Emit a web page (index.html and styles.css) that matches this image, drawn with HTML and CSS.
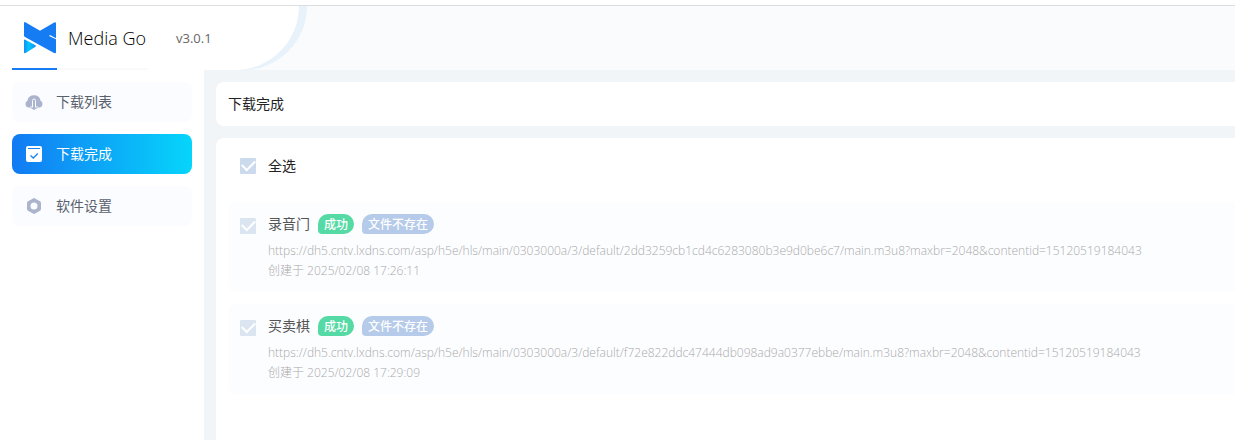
FILE: index.html
```
<!DOCTYPE html>
<html lang="zh-CN">
<head>
  <meta charset="UTF-8">
  <meta name="viewport" content="width=device-width, initial-scale=1.0">
  <title>Media Go</title>
  <link rel="stylesheet" href="styles.css">
</head>
<body>
  <header class="header">
    <div class="brand">
      <svg class="logo" viewBox="0 0 32 32" aria-hidden="true">
        <defs>
          <linearGradient id="play" x1="0" x2="1"><stop offset="0" stop-color="#168cf8"/><stop offset="0.4" stop-color="#00c8ff"/><stop offset="1" stop-color="#168cf8"/></linearGradient>
        </defs>
        <path fill="#167cf3" d="M0 1.500Q0 -0.500 1.800 0.400L16 8.800 30.200 0.400Q32 -0.400 32 1.500V16.300L26 13 25 14 32 17.300V30Q32 32 30 31L1 15Q0 14.500 0 13.500Z"/>
        <path fill="url(#play)" d="M0 18.500Q0 17 1.300 17.800L11.500 23.200Q12.500 24 11.500 24.700L2 30.700Q0 32 0 30Z"/>
      </svg>
      <h1>Media Go</h1>
      <span class="version">v3.0.1</span>
      <div class="progress"></div>
    </div>
  </header>
  <div class="layout">
    <nav class="sidebar">
      <a href="#list">
        <svg viewBox="0 0 20 20" aria-hidden="true">
          <path fill="#abb4cc" d="M6 15.500H4.800A3.600 3.600 0 0 1 3.400 8.700 6.700 6.700 0 0 1 16.600 8.700 3.600 3.600 0 0 1 15.200 15.500H14L10 18 6 15.500Z"/>
          <path fill="none" stroke="#fafbff" d="M8.500 15V8.500a1.500 1.500 0 0 1 3 0V15M6.500 14l2 2M13.500 14l-2 2"/>
        </svg>
        下载列表
      </a>
      <a href="#done" class="active">
        <svg viewBox="0 0 20 20" aria-hidden="true">
          <rect x="2" y="2" width="16" height="16" rx="2" fill="#fff"/>
          <path fill="none" stroke="#1685f8" d="M4 4.500H16"/>
          <path fill="none" stroke="#1685f8" stroke-width="1.300" d="M6.500 11.500l2.800 2.500 4.500-4.500"/>
        </svg>
        下载完成
      </a>
      <a href="#settings">
        <svg viewBox="0 0 20 20" aria-hidden="true">
          <path fill="#abb4cc" fill-rule="evenodd" d="M9 2.400Q10 1.800 11 2.400L16 5.200Q17 5.800 17 7V13Q17 14.200 16 14.800L11 17.600Q10 18.200 9 17.600L4 14.800Q3 14.200 3 13V7Q3 5.800 4 5.200ZM10 6.500a3.500 3.500 0 1 0 0 7a3.500 3.500 0 0 0 0-7Z"/>
        </svg>
        软件设置
      </a>
    </nav>
    <main>
      <h2 class="card title">下载完成</h2>
      <section class="card content">
        <label class="select-all"><input type="checkbox" checked disabled>全选</label>
        <ul class="list">
          <li class="item">
            <input type="checkbox" id="video1" checked disabled>
            <div class="info">
              <div class="name">
                <label for="video1">录音门</label>
                <span class="tag success">成功</span>
                <span class="tag missing">文件不存在</span>
              </div>
              <p>https://dh5.cntv.lxdns.com/asp/h5e/hls/main/0303000a/3/default/2dd3259cb1cd4c6283080b3e9d0be6c7/main.m3u8?maxbr=2048&amp;contentid=15120519184043</p>
              <p>创建于 2025/02/08 17:26:11</p>
            </div>
          </li>
          <li class="item">
            <input type="checkbox" id="video2" checked disabled>
            <div class="info">
              <div class="name">
                <label for="video2">买卖棋</label>
                <span class="tag success">成功</span>
                <span class="tag missing">文件不存在</span>
              </div>
              <p>https://dh5.cntv.lxdns.com/asp/h5e/hls/main/0303000a/3/default/f72e822ddc47444db098ad9a0377ebbe/main.m3u8?maxbr=2048&amp;contentid=15120519184043</p>
              <p>创建于 2025/02/08 17:29:09</p>
            </div>
          </li>
        </ul>
      </section>
    </main>
  </div>
</body>
</html>
```
FILE: styles.css
```
* { box-sizing: border-box; }
body {
  margin: 0; padding-top: 5px; min-height: 100vh; display: flex; flex-direction: column;
  background: #fff; color: #222; font-family: "Open Sans", "Noto Sans CJK SC", sans-serif; font-size: 14px; line-height: 20px;
}
h1, h2, p, ul { margin: 0; padding: 0; font-weight: 400; }

.header { display: flex; height: 65px; border-top: 1px solid #dcdfe2; background: #fafbfd; overflow: hidden; }
.brand {
  position: relative; display: flex; align-items: center; width: 299px; padding-left: 24px;
  background: #fff; border-bottom-right-radius: 64px; box-shadow: 8px 0 0 #e8f2fa;
}
.logo { width: 32px; height: 32px; }
.brand h1 { margin-left: 12px; font-size: 18px; font-weight: 300; line-height: 24px; color: #000; }
.version { margin-left: 30px; font-size: 13px; color: #666; }
.progress { position: absolute; left: 12px; bottom: 0; width: 136px; height: 2px; background: linear-gradient(to right, #167cf3 45px, #f8fafc 45px); }

.layout { flex: 1; display: flex; }
.sidebar { flex: none; width: 204px; padding: 12px; display: flex; flex-direction: column; gap: 12px; }
.sidebar a {
  display: flex; align-items: center; gap: 12px; height: 40px; padding: 0 12px;
  border-radius: 8px; background: #fbfcff; color: #59616d; text-decoration: none;
}
.sidebar a.active { background: linear-gradient(to right, #127af3, #06d5fb); color: #fff; }
.sidebar svg { width: 20px; height: 20px; }

main { flex: 1; min-width: 0; padding: 12px 0 0 12px; display: flex; flex-direction: column; gap: 12px; background: #f1f5f8; }
.card { background: #fff; border-radius: 8px 0 0 8px; }
.title { padding: 12px; font-size: 14px; line-height: 20px; }
.content { flex: 1; padding: 12px 0 12px 12px; border-bottom-left-radius: 0; }
.select-all { display: flex; align-items: center; gap: 12px; height: 32px; padding-left: 12px; }

input[type="checkbox"] {
  appearance: none; flex: none; width: 16px; height: 16px; margin: 0; border-radius: 1px; background: #ccdaed;
  display: grid; place-items: center;
}
input[type="checkbox"]::before {
  content: ""; width: 11px; height: 6px; margin-bottom: 4px;
  border: solid #fff; border-width: 0 0 2px 2px; transform: rotate(-45deg);
}

.list { margin-top: 20px; display: flex; flex-direction: column; gap: 12px; list-style: none; }
.item { display: flex; gap: 12px; padding: 12px 12px 11px; border-radius: 8px 0 0 8px; background: #fcfdff; }
.item input[type="checkbox"] { margin-top: 4px; background: #dbe5f2; }
.info { min-width: 0; font-size: 12px; color: #aaa; overflow-wrap: anywhere; }
.info p { font-weight: 300; }
.name { display: flex; align-items: center; gap: 8px; margin-bottom: 7px; font-size: 14px; color: #555; }
.tag { height: 20px; padding: 0 6px; border-radius: 10px 10px 10px 4px; font-size: 12px; line-height: 22px; font-weight: 500; color: #fff; }
.success { background: #55d9a5; }
.missing { background: #b5cbe9; }
```
